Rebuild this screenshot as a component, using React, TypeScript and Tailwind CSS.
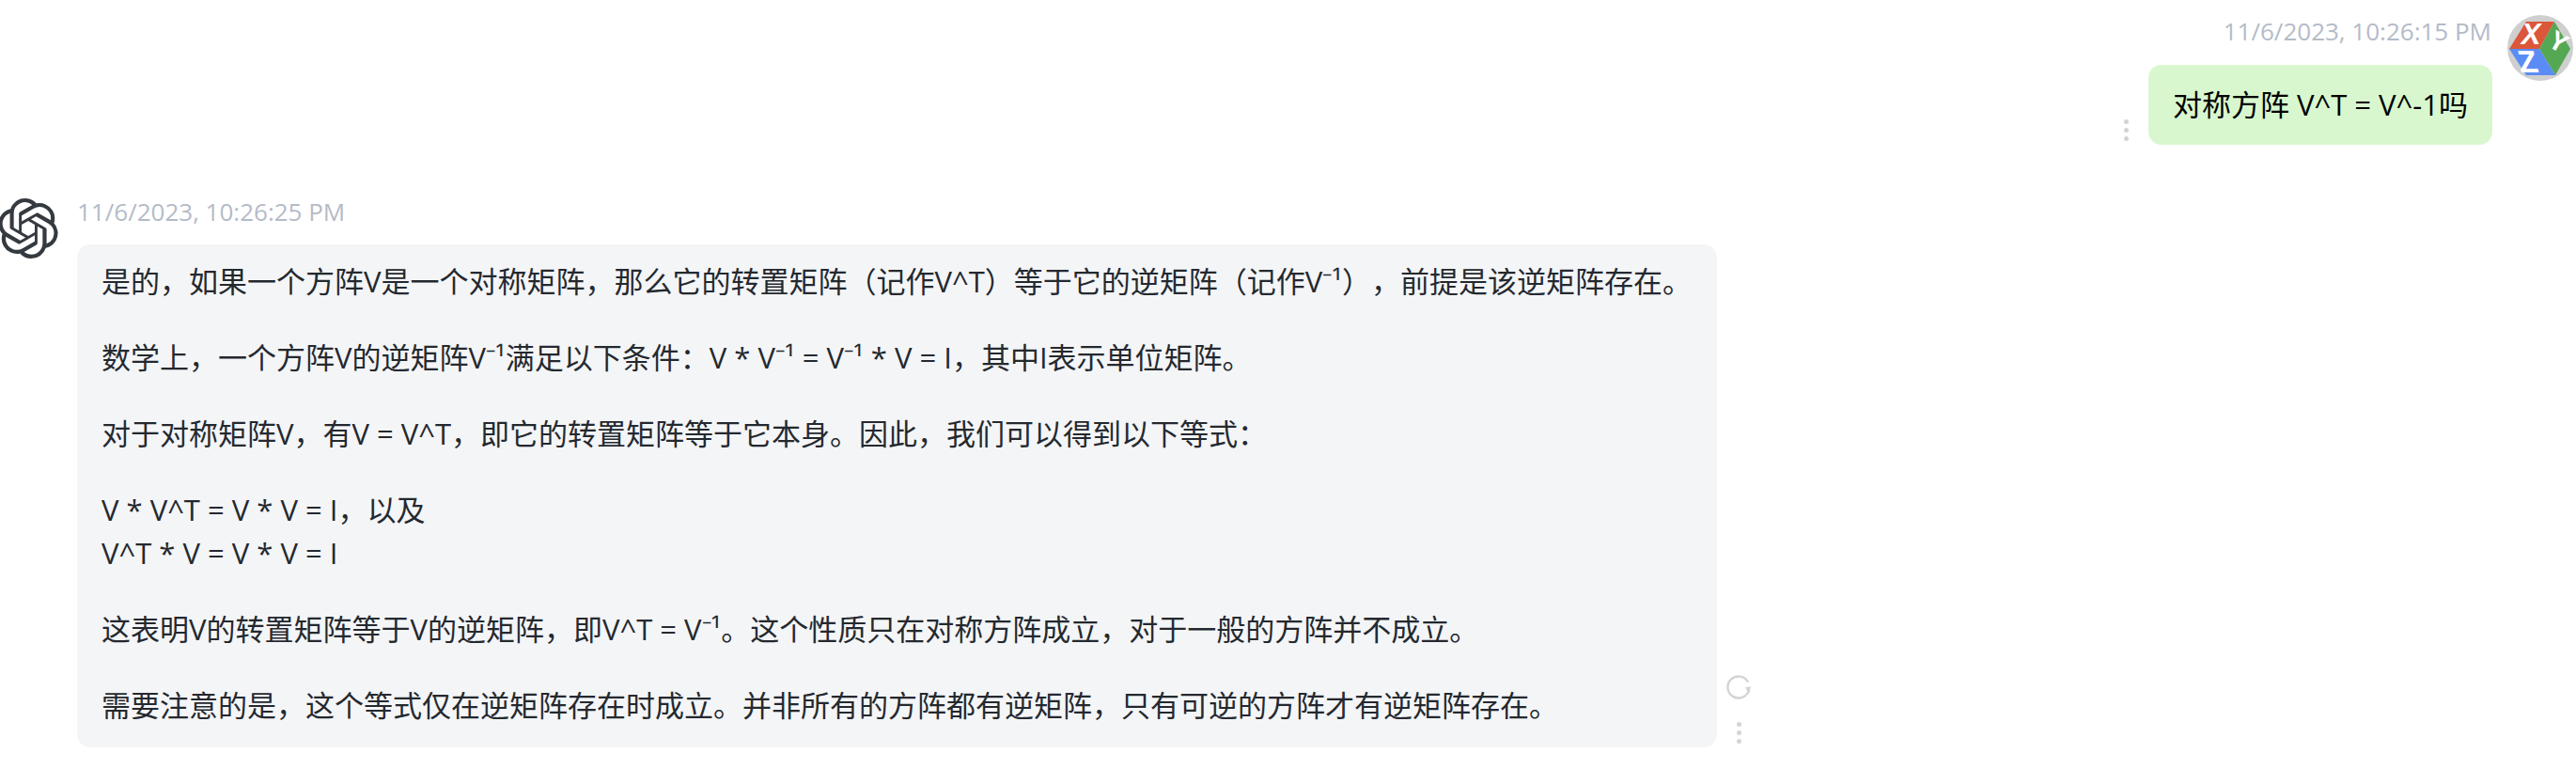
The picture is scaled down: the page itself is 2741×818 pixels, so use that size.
import { SiOpenai } from "react-icons/si";

const font = "font-['Open_Sans','Noto_Sans_CJK_SC',sans-serif]";

function Dots() {
  return (
    <div className="flex flex-col gap-1 items-center">
      <span className="w-[5px] h-[5px] rounded-full bg-[#d4d4d4]" />
      <span className="w-[5px] h-[5px] rounded-full bg-[#d4d4d4]" />
      <span className="w-[5px] h-[5px] rounded-full bg-[#d4d4d4]" />
    </div>
  );
}

function XyzAvatar() {
  return (
    <svg viewBox="0 0 70 70" className="w-[70px] h-[70px] shrink-0">
      <circle cx="35" cy="35" r="35" fill="#cfcfcf" />
      <polygon points="20,7 50,7 34,36 2,36" fill="#dc563a" />
      <polygon points="50,7 67,36 51,64 34,36" fill="#54a854" />
      <polygon points="2,36 34,36 51,64 20,64" fill="#5b8cf5" />
      <text x="25" y="31" textAnchor="middle" fill="#fff" fontFamily="Liberation Sans" fontWeight="700" fontStyle="italic" fontSize="31">X</text>
      <text x="0" y="9" textAnchor="middle" fill="#fff" fontFamily="Liberation Sans" fontWeight="700" fontSize="28" transform="translate(54 29) rotate(30)">Y</text>
      <text x="0" y="0" textAnchor="middle" fill="#fff" fontFamily="Liberation Sans" fontWeight="700" fontSize="33" transform="translate(24 61) skewX(12)">Z</text>
    </svg>
  );
}

function Regen() {
  return (
    <svg viewBox="0 0 26 26" className="w-[26px] h-[26px]">
      <path d="M24 16 A11.5 11.5 0 1 1 23 7.5" fill="none" stroke="#d4d4d4" strokeWidth="2.4" />
      <polygon points="20,13 26,12.5 24,20" fill="#d4d4d4" />
    </svg>
  );
}

const paragraphs = [
  ["是的，如果一个方阵V是一个对称矩阵，那么它的转置矩阵（记作V^T）等于它的逆矩阵（记作V⁻¹），前提是该逆矩阵存在。"],
  ["数学上，一个方阵V的逆矩阵V⁻¹满足以下条件：V * V⁻¹ = V⁻¹ * V = I，其中I表示单位矩阵。"],
  ["对于对称矩阵V，有V = V^T，即它的转置矩阵等于它本身。因此，我们可以得到以下等式："],
  ["V * V^T = V * V = I，以及", "V^T * V = V * V = I"],
  ["这表明V的转置矩阵等于V的逆矩阵，即V^T = V⁻¹。这个性质只在对称方阵成立，对于一般的方阵并不成立。"],
  ["需要注意的是，这个等式仅在逆矩阵存在时成立。并非所有的方阵都有逆矩阵，只有可逆的方阵才有逆矩阵存在。"],
];

export default function App() {
  return (
    <div className={`${font} w-[2741px] h-[818px] bg-white overflow-hidden [text-spacing-trim:space-all]`}>
      <div className="flex justify-end pt-4 pr-[3px] gap-4">
        <div className="flex flex-col items-end">
          <div className="text-[26px] leading-[36px] text-[#b4bbc8] mt-[-1px] mr-px">11/6/2023, 10:26:15 PM</div>
          <div className="flex items-end gap-[21px] mt-[18px]">
            <div className="mb-[4px]"><Dots /></div>
            <div className="bg-[#d9f7ce] rounded-[14px] px-[26px] h-[85px] flex items-center text-[31px] text-black">
              对称方阵 V^T = V^-1吗
            </div>
          </div>
        </div>
        <XyzAvatar />
      </div>

      <div className="flex mt-[57px]">
        <SiOpenai className="w-[64px] h-[64px] ml-[-2px] shrink-0 text-[#343a40]" />
        <div className="ml-[20px] flex flex-col">
          <div className="text-[26px] leading-[36px] text-[#b4bbc8] mt-[-4px]">11/6/2023, 10:26:25 PM</div>
          <div className="flex items-end gap-[10px] mt-[17px]">
            <div className="w-[1745px] bg-[#f4f5f7] rounded-[14px] pl-[26px] pt-[16px] pb-[22px] text-[31px] leading-[46px] text-[#24292f]">
              {paragraphs.map((lines, i) => (
                <div key={i} className="mb-[35px] last:mb-0">
                  {lines.map((l) => <div key={l}>{l}</div>)}
                </div>
              ))}
            </div>
            <div className="flex flex-col items-center gap-[24px] w-[26px] mb-[4px]">
              <Regen />
              <Dots />
            </div>
          </div>
        </div>
      </div>
    </div>
  );
}
